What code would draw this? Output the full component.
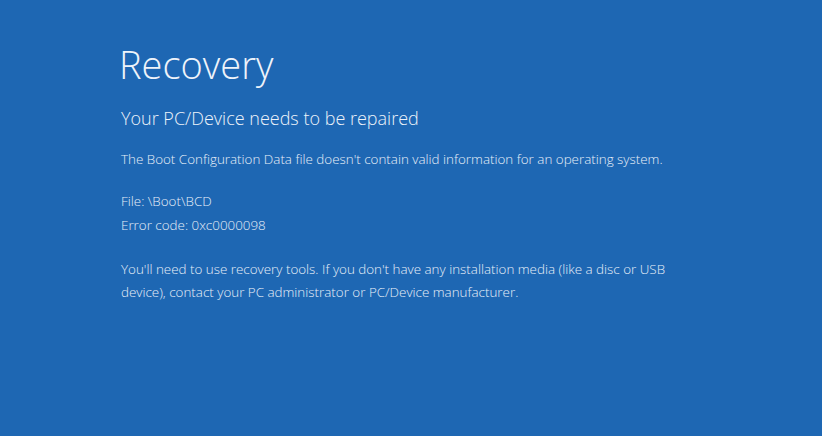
export default function App() {
  return (
    <div className="w-[822px] h-[436px] bg-[#1e67b3] text-white overflow-hidden" style={{ fontFamily: '"Open Sans", "Noto Sans", sans-serif' }}>
      <div className="pl-[119px] pt-[38px]">
        <h1 className="text-[38px] leading-[52px] font-light text-[#eef3fa]">Recovery</h1>
        <h2 className="mt-[16px] text-[18px] leading-[24px] font-light text-[#eef3fa] pl-[2px]">Your PC/Device needs to be repaired</h2>
        <div className="pl-[2px] text-[13.4px] leading-[23.5px] text-[#e6eef8] font-light">
          <p className="mt-[18px]">The Boot Configuration Data file doesn't contain valid information for an operating system.</p>
          <p className="mt-[18.5px]">File: \Boot\BCD</p>
          <p>Error code: 0xc0000098</p>
          <p className="mt-[20.5px] w-[580px]">You'll need to use recovery tools. If you don't have any installation media (like a disc or USB device), contact your PC administrator or PC/Device manufacturer.</p>
        </div>
      </div>
    </div>
  );
}
